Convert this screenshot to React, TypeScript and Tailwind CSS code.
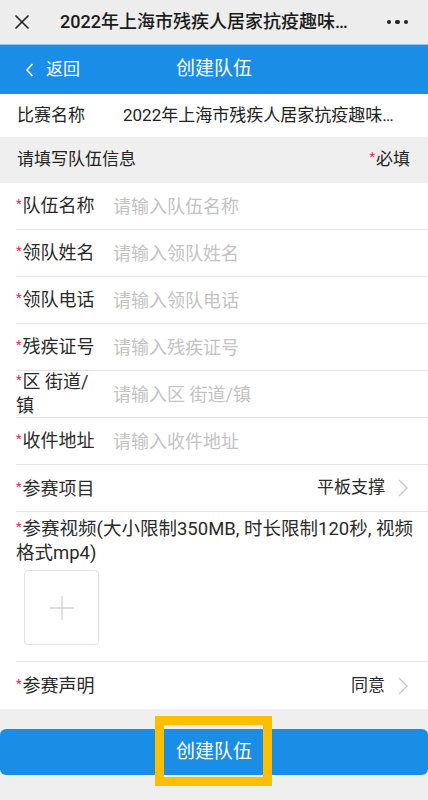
/**
 * 创建队伍 form page (mobile webview).
 */

const FONT = "font-['Roboto','Noto_Sans_CJK_SC',sans-serif]"

function Star() {
  return <span className="relative -top-[4px] mr-[1px] text-[13px] leading-none text-[#e8265e]">*</span>
}

function Chevron() {
  return (
    <svg width="10" height="18" viewBox="0 0 10 18" className="ml-[13px] shrink-0">
      <path d="M1 1l8 8-8 8" fill="none" stroke="#c9c9c9" strokeWidth="1.4" />
    </svg>
  )
}

const fields: { label: string; placeholder: string }[] = [
  { label: '队伍名称', placeholder: '请输入队伍名称' },
  { label: '领队姓名', placeholder: '请输入领队姓名' },
  { label: '领队电话', placeholder: '请输入领队电话' },
  { label: '残疾证号', placeholder: '请输入残疾证号' },
  { label: '区 街道/镇', placeholder: '请输入区 街道/镇' },
  { label: '收件地址', placeholder: '请输入收件地址' },
]

export default function App() {
  return (
    <div className={`relative h-[800px] w-[428px] overflow-hidden bg-[#efefef] ${FONT}`}>
      {/* webview title bar */}
      <div className="flex h-[44px] items-center bg-[#ededed] pl-[14px] pr-[20px]">
        <svg width="16" height="16" viewBox="0 0 16 16" className="shrink-0">
          <path d="M1.5 1.5l13 13M14.5 1.5l-13 13" stroke="#222" strokeWidth="1.6" />
        </svg>
        <div className="ml-[30px] w-[298px] truncate text-[18px] font-medium leading-6 text-[#1b1b1b]">
          2022年上海市残疾人居家抗疫趣味运动会
        </div>
        <div className="ml-auto flex gap-[4px]">
          <span className="h-[4.5px] w-[4.5px] rounded-full bg-[#222]" />
          <span className="h-[4.5px] w-[4.5px] rounded-full bg-[#222]" />
          <span className="h-[4.5px] w-[4.5px] rounded-full bg-[#222]" />
        </div>
      </div>

      {/* blue header */}
      <div className="grid h-[50px] grid-cols-[1fr_auto_1fr] items-center border-t border-[#8fc8f2] bg-[#1a8ee6] text-white">
        <div className="flex items-center pl-[25px]">
          <svg width="9" height="14" viewBox="0 0 9 14">
            <path d="M7.5 1L2 7l5.5 6" fill="none" stroke="#fff" strokeWidth="1.6" />
          </svg>
          <span className="ml-[12px] text-[17px]">返回</span>
        </div>
        <div className="text-[19px]">创建队伍</div>
        <div />
      </div>

      {/* match name */}
      <div className="flex h-[43px] items-center bg-white px-[17px] text-[17px] text-[#222]">
        <span className="w-[106px] shrink-0">比赛名称</span>
        <span className="w-[280px] truncate">2022年上海市残疾人居家抗疫趣味运动会</span>
      </div>

      {/* section header */}
      <div className="flex h-[46px] items-center justify-between bg-[#efefef] pl-[17px] pr-[18px] text-[17px] text-[#222]">
        <span>请填写队伍信息</span>
        <span>
          <Star />必填
        </span>
      </div>

      {/* form */}
      <div className="bg-white pl-[16px]">
        {fields.map((f) => (
          <div key={f.label} className="flex h-[47px] items-center border-b border-[#e3e3e3] text-[18px]">
            <div className="mr-[11px] w-[86px] shrink-0 leading-[24px] text-[#2a2a2a]">
              <Star />
              {f.label}
            </div>
            <div className="text-[#c3c3c3]">{f.placeholder}</div>
          </div>
        ))}

        <div className="flex h-[47px] items-center border-b border-[#e3e3e3] pr-[20px] text-[#2a2a2a]">
          <span className="text-[18px]">
            <Star />
            参赛项目
          </span>
          <span className="ml-auto text-[17px]">平板支撑</span>
          <Chevron />
        </div>

        <div className="border-b border-[#e3e3e3] pb-[16px] pr-[14px] pt-[5px]">
          <div className="text-[18.5px] leading-[24px] text-[#2a2a2a]">
            <Star />
            参赛视频(大小限制350MB, 时长限制120秒, 视频格式mp4)
          </div>
          <div className="ml-[8px] mt-[5px] flex h-[75px] w-[75px] items-center justify-center rounded-[4px] border border-[#e2e2e2]">
            <svg width="26" height="26" viewBox="0 0 26 26">
              <path d="M13 1v24M1 13h24" stroke="#d3d3d3" strokeWidth="1.3" />
            </svg>
          </div>
        </div>

        <div className="flex h-[47px] items-center pr-[20px] text-[#2a2a2a]">
          <span className="text-[18px]">
            <Star />
            参赛声明
          </span>
          <span className="ml-auto text-[17px]">同意</span>
          <Chevron />
        </div>
      </div>

      {/* submit */}
      <div className="pt-[20px]">
        <button
          type="button"
          className="flex h-[46px] w-full items-center justify-center rounded-[6px] bg-[#1a8ee6] text-[19px] text-white"
        >
          创建队伍
        </button>
      </div>

      {/* highlight annotation */}
      <div className="pointer-events-none absolute left-[155px] top-[716px] h-[70px] w-[117px] border-[9px] border-[#fcbf00]" />
    </div>
  )
}
